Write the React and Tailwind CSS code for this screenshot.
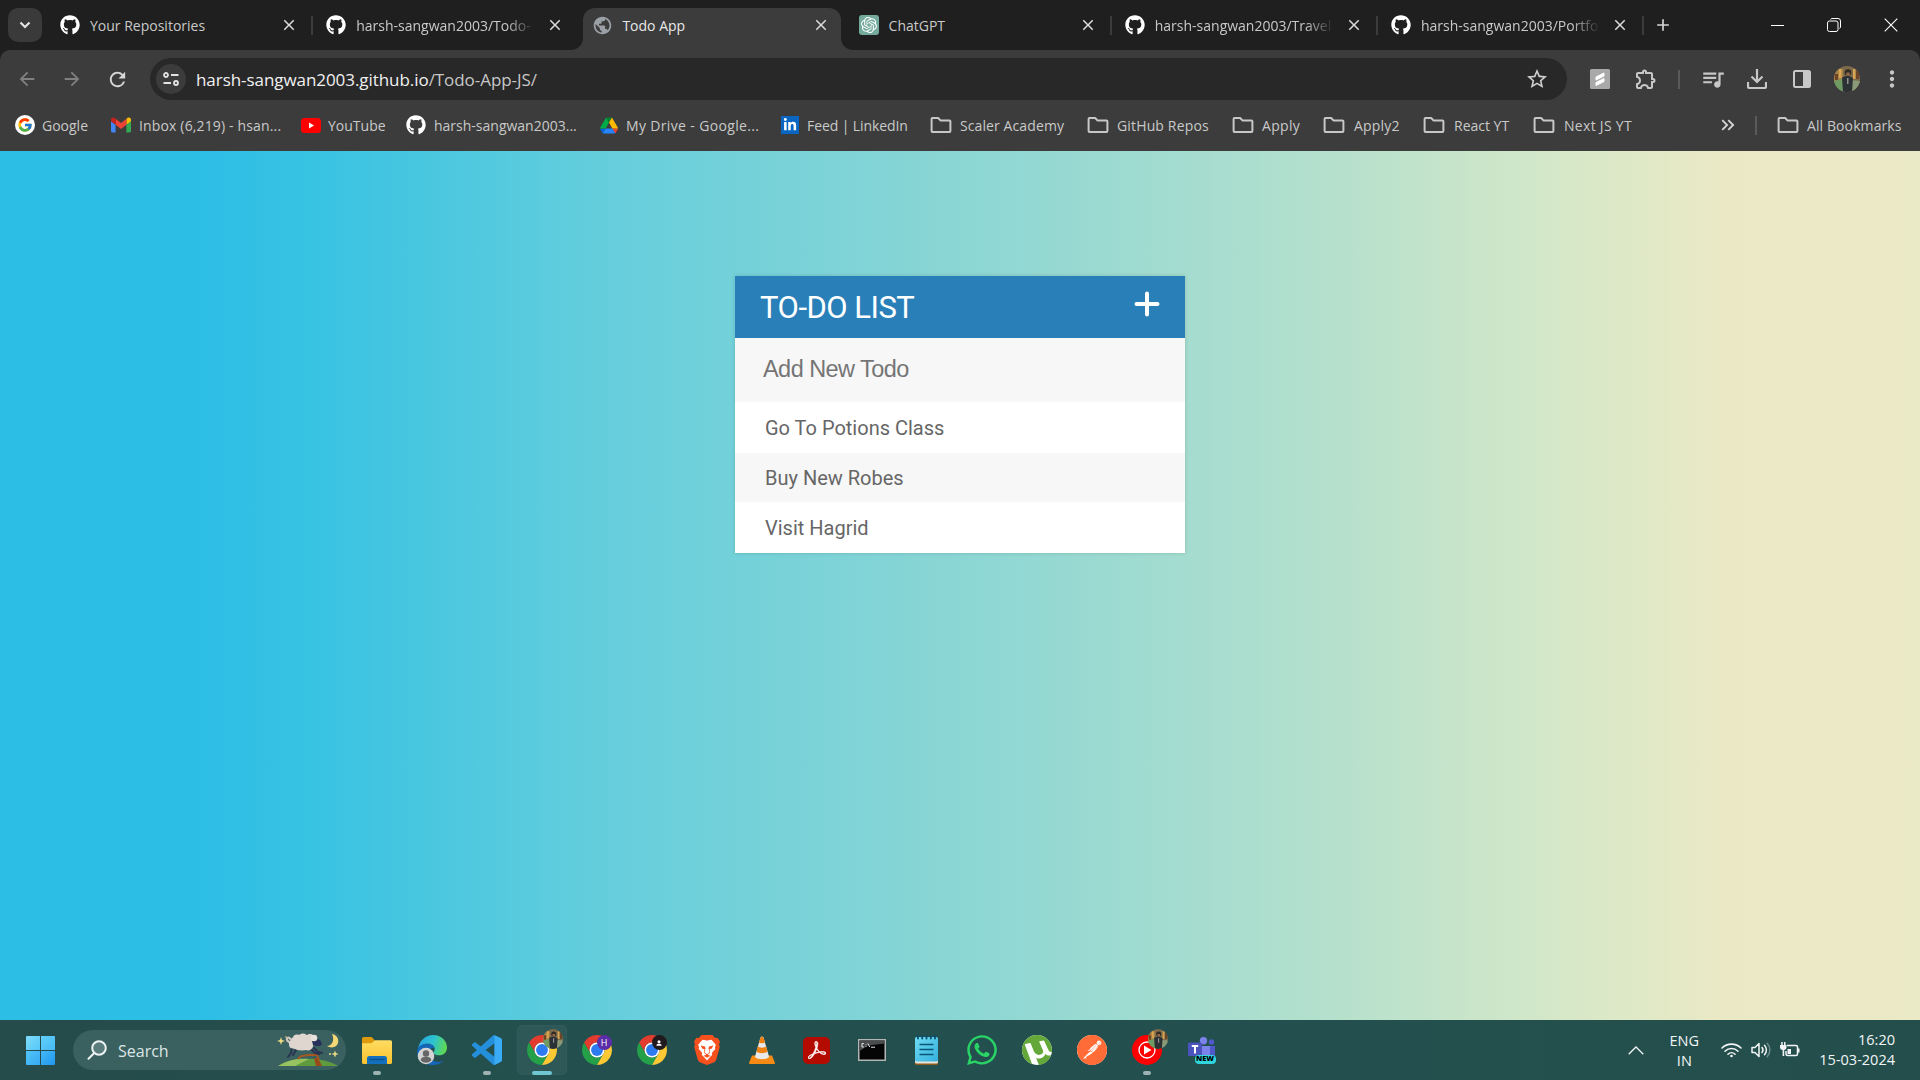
import { FcGoogle } from "react-icons/fc";
import { FaGithub, FaWhatsapp, FaLinkedinIn } from "react-icons/fa6";
import { SiOpenai, SiPostman, SiUtorrent, SiAdobeacrobatreader } from "react-icons/si";
import {
  MdQueueMusic,
  MdOutlineExtension,
  MdStarOutline,
  MdMoreVert,
  MdPublic,
  MdClose,
  MdAdd,
  MdArrowBack,
  MdArrowForward,
  MdRefresh,
  MdKeyboardDoubleArrowRight,
} from "react-icons/md";

/* ---------- small drawings ---------- */

const Github = () => <FaGithub className="size-5 shrink-0 text-white" />;

const Folder = () => (
  <svg viewBox="0 0 22 18" className="h-[18px] w-[22px] shrink-0" fill="none" stroke="#c7c7c7" strokeWidth="2" strokeLinejoin="round">
    <path d="M2.5 2h5.7l2.2 2.4h9.1a.9.9 0 0 1 .9.9v9.8a.9.9 0 0 1-.9.9h-17a.9.9 0 0 1-.9-.9V2.9a.9.9 0 0 1 .9-.9z" />
  </svg>
);

const Gmail = () => (
  <svg viewBox="0 0 20 16" className="ml-px h-4 w-5 shrink-0">
    <path fill="#4285f4" d="M1.4 15.5h3.2V7.8L0 4.3v9.8c0 .8.6 1.4 1.4 1.4z" />
    <path fill="#34a853" d="M15.4 15.5h3.2c.8 0 1.4-.6 1.4-1.4V4.3l-4.6 3.5z" />
    <path fill="#fbbc04" d="M15.4 1.8v6L20 4.3V2.5c0-1.7-2-2.7-3.3-1.7z" />
    <path fill="#ea4335" d="M4.6 7.8v-6L10 5.9l5.4-4.1v6L10 11.9z" />
    <path fill="#c5221f" d="M0 2.5v1.8l4.6 3.5v-6L3.3.8C2-.2 0 .8 0 2.5z" />
  </svg>
);

const Youtube = () => (
  <svg viewBox="0 0 20 15" className="h-[15px] w-5 shrink-0">
    <rect width="20" height="15" rx="3.5" fill="#f00" />
    <path d="M8 4.500v6l5-3z" fill="#fff" />
  </svg>
);

const Drive = () => (
  <svg viewBox="0 0 87.3 78" className="h-[17px] w-[18px] shrink-0">
    <path fill="#0066da" d="m6.600 66.850 3.850 6.650c.8 1.400 1.950 2.500 3.300 3.300l13.750-23.800h-27.500c0 1.550.4 3.100 1.200 4.500z" />
    <path fill="#00ac47" d="m43.650 25-13.750-23.800c-1.350.8-2.500 1.900-3.300 3.300l-25.400 44a9.060 9.060 0 0 0 -1.200 4.500h27.500z" />
    <path fill="#ea4335" d="m73.550 76.800c1.350-.8 2.500-1.900 3.300-3.300l1.600-2.750 7.650-13.250c.8-1.400 1.200-2.950 1.200-4.500h-27.502l5.852 11.500z" />
    <path fill="#00832d" d="m43.650 25 13.750-23.800c-1.350-.8-2.900-1.200-4.500-1.200h-18.500c-1.600 0-3.150.45-4.500 1.200z" />
    <path fill="#2684fc" d="m59.800 53h-32.300l-13.750 23.800c1.350.8 2.900 1.200 4.500 1.200h50.800c1.600 0 3.150-.45 4.500-1.200z" />
    <path fill="#ffba00" d="m73.400 26.500-12.700-22c-.8-1.400-1.950-2.500-3.300-3.300l-13.750 23.800 16.150 28h27.450c0-1.550-.4-3.100-1.200-4.500z" />
  </svg>
);

const Linkedin = () => (
  <span className="grid size-[18px] shrink-0 place-items-center bg-[#0a66c2]">
    <FaLinkedinIn className="size-[14px] text-white" />
  </span>
);

const GoogleMark = () => (
  <span className="grid size-5 shrink-0 place-items-center rounded-full bg-white">
    <FcGoogle className="size-4" />
  </span>
);

const Avatar = ({ size, id }) => (
  <svg viewBox="0 0 26 26" width={size} height={size} className="shrink-0">
    <clipPath id={id}>
      <circle cx="13" cy="13" r="13" />
    </clipPath>
    <g clipPath={`url(#${id})`}>
      <rect width="26" height="26" fill="#7d6a4a" />
      <path d="M0 3h9v12H0z" fill="#a88246" />
      <path d="M5 3h2.500v9H5zM19 3h2.500v10H19z" fill="#d9a552" />
      <path d="M1 8h3v6H1zM22 5h3v8h-3z" fill="#6d4426" />
      <path d="M0 15l8-2 2 14H0z" fill="#6f9a63" />
      <path d="M17 14l9 1v12h-8z" fill="#8a9a78" />
      <path d="M8 11.500l4-1.500h3l4 2-1 14H9z" fill="#2c3135" />
      <path d="M13 12h1.500v6H13z" fill="#8f9290" />
      <circle cx="14" cy="6.500" r="3.300" fill="#2f2a24" />
      <path d="M12.300 6.500h3.400v3.300h-3.400z" fill="#93694c" />
    </g>
  </svg>
);

const Chrome = () => (
  <svg viewBox="0 0 48 48" className="size-[30px]">
    <path fill="#e33b2e" d="M24 12H44.780A24 24 0 0 0 3.220 12L13.600 30A12 12 0 0 1 24 12Z" />
    <path fill="#24a148" d="M3.220 12A24 24 0 0 0 24 48L34.400 30A12 12 0 0 1 13.600 30Z" />
    <path fill="#fcc934" d="M44.780 12A24 24 0 0 1 24 48L34.400 30A12 12 0 0 0 24 12Z" />
    <circle cx="24" cy="24" r="12" fill="#fff" />
    <circle cx="24" cy="24" r="9.500" fill="#2d7bf0" />
  </svg>
);

const Explorer = () => (
  <svg viewBox="0 0 30 28" className="h-7 w-[30px]">
    <defs>
      <linearGradient id="folderFront" x1="0" y1="0" x2="0" y2="1">
        <stop offset="0" stopColor="#ffdc62" />
        <stop offset="1" stopColor="#f9c22c" />
      </linearGradient>
    </defs>
    <path d="M0 2.500A1.500 1.500 0 0 1 1.500 1h8.200l3.200 3.400V10H0z" fill="#dc9a0c" />
    <path d="M0 7.200h9.500L13 4.200h15.500A1.500 1.500 0 0 1 30 5.700V26.500a1.500 1.500 0 0 1-1.500 1.500h-27A1.500 1.500 0 0 1 0 26.500z" fill="url(#folderFront)" />
    <path d="M5 22.500a2.500 2.500 0 0 1 2.500-2.500h15a2.500 2.500 0 0 1 2.500 2.500V28H5z" fill="#1370be" />
    <path d="M8 23.500h14" stroke="#0b4f8f" strokeWidth="1.400" strokeLinecap="round" />
  </svg>
);

const Edge = () => (
  <svg viewBox="0 0 30 30" className="size-[30px]">
    <defs>
      <linearGradient id="edgeTop" x1="0" y1="0.400" x2="1" y2="0.600">
        <stop offset="0" stopColor="#2aa5e4" />
        <stop offset=".5" stopColor="#2cc3cf" />
        <stop offset="1" stopColor="#62d948" />
      </linearGradient>
    </defs>
    <path d="M1 14C2.500 5 9 0 16 0c8.500 0 14 6 14 12.500 0 5-3.500 7.800-8 7.800-4 0-5.500-1.600-5.500-2.800 0-1 1.200-1.500 1.200-3.500 0-3-3-5.300-7-5.300C6 8.700 3 10.700 1 14z" fill="url(#edgeTop)" />
    <path d="M0 16C1 11 5 8.700 10 8.700c4 0 7.700 2.300 7.700 5.300-3-2.500-5.700.5-5.700 4.500 0 5 5 8.500 9.500 8.500 2.500 0 4.500-1 6-2-3 3.500-7 5-12 5C7 30 0 24 0 16z" fill="#1566b8" />
    <circle cx="9" cy="21" r="8.300" fill="#d3d3d3" />
    <circle cx="9" cy="18.500" r="3.200" fill="#666" />
    <path d="M3.800 25.500c0-3 2.200-3.700 5.200-3.700s5.200.7 5.200 3.700a7 7 0 0 1-10.400 0z" fill="#666" />
  </svg>
);

const VsCode = () => (
  <svg viewBox="0 0 24 24" className="size-[30px]">
    <path
      fill="#2490dc"
      d="M23.150 2.587L18.210.21a1.494 1.494 0 0 0-1.705.29l-9.460 8.630-4.120-3.128a.999.999 0 0 0-1.276.057L.327 7.261A1 1 0 0 0 .326 8.740L3.899 12 .326 15.260a1 1 0 0 0 .001 1.479L1.650 17.940a.999.999 0 0 0 1.276.057l4.120-3.128 9.460 8.630a1.492 1.492 0 0 0 1.704.29l4.942-2.377A1.500 1.500 0 0 0 24 20.060V3.939a1.500 1.500 0 0 0-.85-1.352zm-5.146 14.861L10.826 12l7.178-5.448v10.896z"
    />
    <path fill="#3aabf5" d="M18 .1l5.150 2.487A1.500 1.500 0 0 1 24 3.939V20.060a1.500 1.500 0 0 1-.85 1.350L18 23.900z" />
  </svg>
);

const Brave = () => (
  <svg viewBox="0 0 26 30" className="h-[30px] w-[26px]">
    <path d="M7.500 0h11l2.700 3 2.300-.3L26 6.500l-1 3 .8 2.500-3.500 12.500a6 6 0 0 1-2 2.700L13 30l-7.300-2.800a6 6 0 0 1-2-2.700L.2 12 1 9.500l-1-3 2.500-3.800 2.300.3z" fill="#f6501e" />
    <path d="M8.500 4.800l4.500.8 4.500-.8 4.300 5-.8 2.600.3 1.600-3.500 4 .4 2-1.700 1.500L13 25.500l-3.500-4-1.700-1.500.4-2-3.500-4 .3-1.600-.8-2.600z" fill="#fff" />
    <path d="M6.500 10.500l4.500 1 .5 1.700-1 4.300 2.500 1.800 2.500-1.800-1-4.300.5-1.700 4.500-1-2 3.200-2 .5.600 3.500-3.100 2.700-3.100-2.700.6-3.500-2-.5z" fill="#f6501e" />
    <path d="M9.500 20.800l3.500-1.300 3.500 1.300-3.500 2z" fill="#f6501e" />
  </svg>
);

const Vlc = () => (
  <svg viewBox="0 0 26 28" className="h-7 w-[26px]">
    <path d="M3 19.500h20l3 7.500a1 1 0 0 1-1 1H1a1 1 0 0 1-1-1z" fill="#f58a14" />
    <path d="M11.500 1.500C12 0 14 0 14.500 1.500L20 20.500c0 3.500-14 3.500-14 0z" fill="#e9e9e9" />
    <path d="M11.200 2.500L10 6.500c1.500 1 4.500 1 6 0l-1.200-4C14.200 0 11.800 0 11.200 2.500z" fill="#f08010" />
    <path d="M8.900 10.500L7.500 15.500c2 2.200 9 2.200 11 0l-1.400-5c-2 1.500-6.200 1.500-8.200 0z" fill="#f08010" />
  </svg>
);

const Acrobat = () => (
  <span className="grid size-[27px] place-items-center rounded-[5px] bg-[#b30b00]">
    <SiAdobeacrobatreader className="size-[18px] text-white" stroke="#fff" strokeWidth=".8" />
  </span>
);

const Terminal = () => (
  <svg viewBox="0 0 28 22" className="h-[22px] w-7">
    <rect x=".75" y=".75" width="26.500" height="20.500" fill="#050505" stroke="#b3b6b6" strokeWidth="1.500" />
    <path d="M1.500 1.500h25v3L10 6.500 1.500 12z" fill="#4a4d4e" />
    <path d="M5.800 4.500H4v3.500h1.800M8 5v.6M8 7.300v.7M9.800 4.500l2 3.500M13 8.200h4" stroke="#e6e6e6" strokeWidth="1" fill="none" />
  </svg>
);

const Notepad = () => (
  <svg viewBox="0 0 23 30" className="h-[30px] w-[23px]">
    <rect y="24" width="23" height="6" rx="1.500" fill="#8a5a1c" />
    <rect y="22" width="23" height="6.500" rx="1.500" fill="#e9e4dc" />
    <defs>
      <linearGradient id="notepadPage" x1="0" y1="0" x2="1" y2="1">
        <stop offset="0" stopColor="#6fdcf3" />
        <stop offset="1" stopColor="#35b0dc" />
      </linearGradient>
    </defs>
    <rect y="2" width="23" height="24.500" rx="1.500" fill="url(#notepadPage)" />
    <path d="M4.500 9.500h14M4.500 14.500h14M4.500 19.500h14" stroke="#0b5678" strokeWidth="1.700" />
    <path d="M3 1v2.500M7.200 1v2.500M11.500 1v2.500M15.800 1v2.500M20 1v2.500" stroke="#0b5070" strokeWidth="1.800" strokeLinecap="round" />
  </svg>
);

const Utorrent = () => (
  <span className="grid size-[30px] place-items-center rounded-full bg-white">
    <SiUtorrent className="size-[30px] text-[#65a83a]" />
  </span>
);

const Postman = () => (
  <span className="grid size-[30px] place-items-center rounded-full bg-white">
    <SiPostman className="size-[30px] text-[#ff6c37]" />
  </span>
);

const YoutubeMusic = () => (
  <svg viewBox="0 0 30 30" className="size-[30px]">
    <circle cx="15" cy="15" r="15" fill="#f00" />
    <circle cx="15" cy="15" r="8" fill="none" stroke="#fff" strokeWidth="1.300" />
    <path d="M12 10.500v9l7.500-4.500z" fill="#fff" />
  </svg>
);

const Teams = () => (
  <div className="relative h-[27px] w-7">
    <svg viewBox="0 0 28 24" className="h-6 w-7">
      <circle cx="15.500" cy="3.700" r="3.700" fill="#7b83eb" />
      <circle cx="23.500" cy="5" r="2.700" fill="#5059c9" />
      <path d="M19 9h8v8a4 4 0 0 1-8 0z" fill="#5059c9" />
      <path d="M10 9h12v9a5 5 0 0 1-12 0z" fill="#7b83eb" />
      <rect y="5.500" width="14" height="13.500" rx="1.500" fill="#4b53bc" />
      <path d="M3.800 9h6.400M7 9v7.500" stroke="#fff" strokeWidth="2" />
    </svg>
    <span className="absolute top-[18px] left-[7px] flex h-[9px] w-[21px] items-center justify-center rounded-sm bg-[#2fd6dd] text-[7.5px] leading-none font-extrabold text-black">
      NEW
    </span>
  </div>
);

const Sheep = () => (
  <svg viewBox="0 0 62 34" className="h-[34px] w-[62px]">
    <path d="M1 33C12 25 44 22 61 33z" fill="#5f9a3e" />
    <path d="M1 33C12 26 24 25 32 26L18 33z" fill="#97c260" />
    <path d="M41 25l4 8h-6l-2-8z" fill="#9a4a1a" />
    <path d="M21 26l3-3 8-1 8 0 2 5" stroke="#a8581f" strokeWidth="1.800" fill="none" />
    <path d="M15 15l-1 5-3 4M19 17l-3 5M37 15l4 4 4 1M34 16l4 4 4 1" stroke="#2b3352" strokeWidth="2" fill="none" strokeLinecap="round" />
    <path d="M14 7C12 3 9 5 10 7s3 2 5 4" stroke="#cfc4bc" strokeWidth="2.200" fill="none" />
    <g fill="#dfd6cf">
      <ellipse cx="25" cy="9.500" rx="12" ry="8" />
      <circle cx="16" cy="11.500" r="4" />
      <circle cx="33" cy="6" r="5" />
      <circle cx="26" cy="4.500" r="4" />
      <circle cx="20" cy="5.500" r="4" />
      <circle cx="31" cy="12.500" r="5" />
    </g>
    <path d="M35 8c2-2 6-2 8-1l2 4c-1 2.500-6 2.500-9 1z" fill="#27305a" />
    <circle cx="37" cy="5" r="3.300" fill="#e9e1db" />
    <path d="M55 1c5 1 7 5 6 9s-6 6-11 3c5 0 8-6 5-12z" fill="#f3d774" />
    <path d="M4 4l1 3 3 1-3 1-1 3-1-3-3-1 3-1z" fill="#efdc84" />
    <path d="M58 17.500l1 2.500 2.500 1-2.500 1-1 2.500-1-2.500-2.500-1 2.500-1z" fill="#e6d684" />
    <circle cx="53" cy="21" r="1" fill="#e6d684" />
    <circle cx="9" cy="4" r=".8" fill="#e6d684" />
  </svg>
);

/* ---------- browser chrome ---------- */

const GlobeIcon = () => <MdPublic className="size-[21px] shrink-0 text-[#9aa0a6]" />;
const GptIcon = () => (
  <span className="grid size-5 shrink-0 place-items-center rounded-[3px] bg-[#74aa9c]">
    <SiOpenai className="size-4 text-white" />
  </span>
);

const tabs = [
  { title: "Your Repositories", Icon: Github, sep: true },
  { title: "harsh-sangwan2003/Todo-", Icon: Github, fade: true },
  { title: "Todo App", Icon: GlobeIcon, active: true },
  { title: "ChatGPT", Icon: GptIcon, sep: true },
  { title: "harsh-sangwan2003/Travel", Icon: Github, sep: true, fade: true },
  { title: "harsh-sangwan2003/Portfo", Icon: Github, sep: true, fade: true },
];

function Tab({ title, Icon, active, sep, fade }) {
  return (
    <div className="relative flex h-[50px] w-[266.2px] shrink-0 items-center pl-[13px]">
      {active && (
        <div className="absolute top-2 bottom-0 left-1 w-[258px] rounded-t-xl bg-[#3c3c3c]">
          <div className="absolute bottom-0 -left-3 size-3 bg-[radial-gradient(circle_at_0_0,transparent_11.5px,#3c3c3c_12.5px)]" />
          <div className="absolute -right-3 bottom-0 size-3 bg-[radial-gradient(circle_at_100%_0,transparent_11.5px,#3c3c3c_12.5px)]" />
        </div>
      )}
      <div className="relative flex w-full items-center">
        <div className="flex size-5 shrink-0 items-center justify-center">
          <Icon />
        </div>
        <div
          className={
            "ml-[10px] w-[179px] pt-[2px] text-[14px] leading-5 whitespace-nowrap " +
            (active ? "text-[#e8e8e8] " : "text-[#c9c9c9] ") +
            (fade ? "[mask-image:linear-gradient(to_right,black_84%,transparent_100%)]" : "")
          }
        >
          {title}
        </div>
        <MdClose className="ml-[11px] size-[18px] text-[#dcdcdc]" />
      </div>
      {sep && <div className="absolute top-4 right-0 h-[19px] w-[2px] bg-[#3c3c3c]" />}
    </div>
  );
}

const bookmarks = [
  { label: "Google", Icon: GoogleMark, w: "w-[95px] gap-[7px]" },
  { label: "Inbox (6,219) - hsan...", Icon: Gmail, w: "w-[191px] gap-2 tracking-[0.15px]" },
  { label: "YouTube", Icon: Youtube, w: "w-[105px] gap-[7px]" },
  { label: "harsh-sangwan2003...", Icon: Github, w: "w-[194px] gap-2" },
  { label: "My Drive - Google...", Icon: Drive, w: "w-[181px] gap-2 tracking-[0.35px]" },
  { label: "Feed | LinkedIn", Icon: Linkedin, w: "w-[149px] gap-2 tracking-[-0.1px]" },
  { label: "Scaler Academy", Icon: Folder, w: "w-[157px] gap-2 tracking-[0.1px]" },
  { label: "GitHub Repos", Icon: Folder, w: "w-[145px] gap-2 tracking-[0.15px]" },
  { label: "Apply", Icon: Folder, w: "w-[91px] gap-2 tracking-[0.3px]" },
  { label: "Apply2", Icon: Folder, w: "w-[100px] gap-[9px] tracking-[0.2px]" },
  { label: "React YT", Icon: Folder, w: "w-[110px] gap-[9px]" },
  { label: "Next JS YT", Icon: Folder, w: "w-[110px] gap-[9px] tracking-[0.3px]" },
];

function Browser() {
  return (
    <header className="h-[151px] bg-[#1f1f1f]">
      <div className="flex h-[50px]">
        <div className="flex w-[47px] items-center pl-2">
          <div className="grid size-[34px] place-items-center rounded-[10px] bg-[#3a3a3a]">
            <svg viewBox="0 0 12 8" className="h-2 w-3" fill="none" stroke="#e3e3e3" strokeWidth="2.2">
              <path d="M1.5 1.500L6 6l4.500-4.500" />
            </svg>
          </div>
        </div>
        {tabs.map((t) => (
          <Tab key={t.title} {...t} />
        ))}
        <div className="flex flex-1 items-center justify-between pr-[22px] pl-[9px]">
          <MdAdd className="size-5 text-[#d6d6d6]" />
          <div className="flex items-center gap-[43px] text-white">
            <div className="h-px w-[13px] bg-white" />
            <svg viewBox="0 0 14 14" className="size-[14px]" fill="none" stroke="currentColor">
              <rect x=".5" y="3" width="10.500" height="10.500" rx="2" />
              <path d="M3.500 1.500A2 2 0 0 1 5 .5h6a2.500 2.500 0 0 1 2.500 2.500v6a2 2 0 0 1-1 1.500" />
            </svg>
            <svg viewBox="0 0 14 14" className="size-[14px]" fill="none" stroke="currentColor" strokeWidth="1.100">
              <path d="M.7.7l12.600 12.600M13.300.7L.7 13.300" />
            </svg>
          </div>
        </div>
      </div>

      <div className="h-[101px] rounded-t-[10px] bg-[#3c3c3c] pt-2">
        <div className="flex h-[42px] items-center">
          <div className="flex w-[150px] items-center gap-[23px] pl-4">
            <MdArrowBack className="size-[22px] text-[#808080]" />
            <MdArrowForward className="size-[22px] text-[#808080]" />
            <MdRefresh className="size-[23px] text-[#d6d6d6]" />
          </div>
          <div className="flex h-[42px] w-[1417px] items-center rounded-full bg-[#282828] pr-[18px] pl-[6px]">
            <div className="grid size-[30px] place-items-center rounded-full bg-[#3c3c3c]">
              <svg viewBox="0 0 16 14" className="h-[14px] w-4" fill="none" stroke="#e3e3e3" strokeWidth="1.800">
                <circle cx="3" cy="3" r="2" />
                <path d="M8 3h7.500M.5 11H8" />
                <circle cx="13" cy="11" r="2" />
              </svg>
            </div>
            <div className="ml-[10px] flex-1 pt-px text-[17px] tracking-[-0.06px] text-[#c7c7c7]">
              <span className="text-[#f1f1f1]">harsh-sangwan2003.github.io</span>/Todo-App-JS/
            </div>
            <MdStarOutline className="size-6 text-[#d0d0d0]" />
          </div>
          <div className="flex flex-1 items-center pl-[23px] text-[#c7c7c7]">
            <svg viewBox="0 0 20 20" className="size-5">
              <rect width="20" height="20" rx="1.500" fill="#a9a9a9" />
              <path d="M6 8l8-4v3l-8 4zM6 13.500l8-4v3l-8 4z" fill="#fff" stroke="#fff" strokeLinejoin="round" />
            </svg>
            <MdOutlineExtension className="ml-[24px] size-6" />
            <div className="ml-5 h-[19px] w-[2px] bg-[#5a5a5a]" />
            <MdQueueMusic className="ml-[20px] size-[26px]" />
            <svg viewBox="0 0 20 20" className="ml-[21px] size-5" fill="none" stroke="currentColor" strokeWidth="2.200">
              <path d="M10 0v12.500M4.500 7.500L10 13l5.500-5.500M1 13v4.500a1.500 1.500 0 0 0 1.500 1.500h15a1.500 1.500 0 0 0 1.500-1.500V13" />
            </svg>
            <svg viewBox="0 0 18 18" className="ml-[26px] size-[18px]">
              <rect x="1" y="1" width="16" height="16" rx="1.500" fill="none" stroke="currentColor" strokeWidth="2" />
              <path d="M10 1h7v16h-7z" fill="currentColor" />
            </svg>
            <div className="ml-[23px]">
              <Avatar size={26} id="toolbarAvatar" />
            </div>
            <MdMoreVert className="ml-[19px] size-[26px]" />
          </div>
        </div>
        <div className="mt-[5px] flex h-10 items-center pl-[15px] text-[14px] text-[#c9c9c9]">
          {bookmarks.map(({ label, Icon, w }) => (
            <div key={label} className={"flex shrink-0 items-center whitespace-nowrap " + w}>
              <Icon />
              <span>{label}</span>
            </div>
          ))}
          <div className="flex flex-1 items-center pl-[74px] whitespace-nowrap">
            <MdKeyboardDoubleArrowRight className="size-[22px] text-[#d6d6d6]" />
            <div className="mr-5 ml-4 h-[19px] w-[2px] bg-[#5a5a5a]" />
            <Folder />
            <span className="ml-[8px] tracking-[0.1px]">All Bookmarks</span>
          </div>
        </div>
      </div>
    </header>
  );
}

/* ---------- page ---------- */

const todos = ["Go To Potions Class", "Buy New Robes", "Visit Hagrid"];

function TodoPage() {
  return (
    <main className="flex h-[869px] items-start justify-center bg-[linear-gradient(to_right,#2dbee6_0%,#2dbee6_10.5%,#38c3e2_16.5%,#66cedc_32%,#8bd6d4_50%,#b4e0cd_69%,#d6e8c8_81.5%,#ebe9c5_90%,#ebeac6_100%)] pt-[125px]">
      <section className="w-[450px] bg-[#f7f7f7] font-[Roboto,sans-serif] shadow-[0_0_4px_rgba(0,0,0,0.15)]">
        <div className="flex h-[62px] items-center justify-between bg-[#2980b9] px-[25px] text-white">
          <h1 className="pt-[2px] text-[31px] leading-9 tracking-[-0.5px]">TO-DO LIST</h1>
          <svg viewBox="0 0 26 26" className="mb-[6px] size-[26px]" stroke="currentColor" strokeWidth="4" strokeLinecap="round">
            <path d="M13 2.500v21M2.500 13h21" />
          </svg>
        </div>
        <input
          className="block h-16 w-full bg-[#f7f7f7] pb-[2px] pl-7 font-[Liberation_Sans,sans-serif] text-[23.5px] tracking-[-0.55px] outline-none placeholder:text-[#757575]"
          placeholder="Add New Todo"
        />
        <ul className="text-[20px] text-[#666]">
          {todos.map((t, i) => (
            <li
              key={t}
              className={"flex items-center pl-[30px] " + (i % 2 ? "h-[49px] bg-[#f7f7f7]" : "h-[51px] bg-white")}
            >
              {t}
            </li>
          ))}
        </ul>
      </section>
    </main>
  );
}

/* ---------- taskbar ---------- */

const Badge = ({ children }) => <div className="absolute -top-[6px] -right-[6px]">{children}</div>;

const apps = [
  { id: "explorer", Icon: Explorer, run: true },
  { id: "edge", Icon: Edge },
  { id: "vscode", Icon: VsCode, run: true },
  { id: "chrome", Icon: Chrome, active: true, badge: <Badge><Avatar size={20} id="chromeAvatar" /></Badge> },
  {
    id: "chrome-h",
    Icon: Chrome,
    badge: (
      <div className="absolute top-0 right-0 grid size-[15px] place-items-center rounded-full bg-[#5b2da8] text-[9px] leading-none text-white">H</div>
    ),
  },
  {
    id: "chrome-guest",
    Icon: Chrome,
    badge: (
      <div className="absolute top-0 right-0 grid size-[15px] place-items-center rounded-full bg-[#20191d]">
        <svg viewBox="0 0 8 8" className="size-[6px]" fill="#fff">
          <circle cx="4" cy="2.300" r="2" />
          <path d="M.5 7.500c0-2 1.500-2.600 3.500-2.600s3.500.6 3.500 2.600z" />
        </svg>
      </div>
    ),
  },
  { id: "brave", Icon: Brave },
  { id: "vlc", Icon: Vlc },
  { id: "acrobat", Icon: Acrobat },
  { id: "terminal", Icon: Terminal },
  { id: "notepad", Icon: Notepad },
  { id: "whatsapp", Icon: () => <FaWhatsapp className="size-[34px] text-[#2ad366]" /> },
  { id: "utorrent", Icon: Utorrent },
  { id: "postman", Icon: Postman },
  { id: "ytmusic", Icon: YoutubeMusic, run: true, badge: <Badge><Avatar size={20} id="musicAvatar" /></Badge> },
  { id: "teams", Icon: Teams },
];

function Taskbar() {
  return (
    <footer className="flex h-[60px] items-center bg-[linear-gradient(to_right,#254b4a,#23504e_30%,#23504e_70%,#244e4c)] text-[#f2f5f5]">
      <div className="flex w-[73px] pl-[26px]">
        <div className="grid size-[29px] grid-cols-2 gap-px overflow-hidden rounded-[1px]">
          <div className="bg-[linear-gradient(135deg,#7fdcfc,#55c6f8)]" />
          <div className="bg-[linear-gradient(135deg,#63d0fa,#45b9f5)]" />
          <div className="bg-[linear-gradient(135deg,#52c4f8,#36a9f2)]" />
          <div className="bg-[linear-gradient(135deg,#45b8f6,#1f97ee)]" />
        </div>
      </div>
      <div className="flex h-10 w-[273px] items-center overflow-hidden rounded-full bg-[#3a605f] pr-[7px] pl-[14px]">
        <svg viewBox="0 0 20 20" className="size-5" fill="none" stroke="#eef3f3" strokeWidth="2">
          <circle cx="12" cy="8" r="6.800" fill="#5a7c7b" />
          <path d="M7.200 13L1.500 18.700" strokeLinecap="round" />
        </svg>
        <span className="ml-[11px] flex-1 pt-px text-[16px] text-[#dde6e6]">Search</span>
        <Sheep />
      </div>
      <nav className="ml-[3px] flex">
        {apps.map(({ id, Icon, run, active, badge }) => (
          <div key={id} className="grid h-[60px] w-[55px] place-items-center">
            <div
              className={
                "relative grid size-[50px] place-items-center rounded-[5px] " + (active ? "border border-[#315c5b] bg-[#2d5857]" : "")
              }
            >
              <div className="relative">
                <Icon />
                {badge}
              </div>
              {run && <div className="absolute bottom-0 h-1 w-2 rounded-full bg-[#9cb3b2]" />}
              {active && <div className="absolute -bottom-px h-1 w-5 rounded-full bg-[#6fc6cf]" />}
            </div>
          </div>
        ))}
      </nav>
      <div className="ml-auto flex items-center pr-[25px] text-[14.5px] leading-5">
        <svg viewBox="0 0 16 9" className="h-[9px] w-4" fill="none" stroke="currentColor" strokeWidth="1.300">
          <path d="M.7 8.300L8 1l7.300 7.300" />
        </svg>
        <div className="ml-[25px] w-[30px] pt-px text-center text-[14.5px]">
          ENG
          <br />
          IN
        </div>
        <div className="ml-[22px] flex items-center gap-[9px]">
          <svg viewBox="0 0 21 16" className="h-4 w-[21px]" fill="none" stroke="currentColor" strokeWidth="1.600" strokeLinecap="round">
            <path d="M1 6a13.500 13.500 0 0 1 19 0M4 9.200a9.200 9.200 0 0 1 13 0M7 12.200a5 5 0 0 1 7 0" />
            <circle cx="10.500" cy="14" r="1.300" fill="currentColor" stroke="none" />
          </svg>
          <svg viewBox="0 0 20 18" className="h-[18px] w-5" fill="none" stroke="currentColor" strokeWidth="1.500" strokeLinecap="round" strokeLinejoin="round">
            <path d="M1 6.500v5h3l4 4v-13l-4 4z" />
            <path d="M11 6.500a4 4 0 0 1 0 5M13.500 4.200a7 7 0 0 1 0 9.600" />
            <path d="M16.200 2.200a10 10 0 0 1 0 13.600" opacity=".35" />
          </svg>
          <svg viewBox="0 0 20 16" className="h-4 w-5" fill="none" stroke="currentColor" strokeWidth="1.500">
            <path d="M7 3.500h9a1.500 1.500 0 0 1 1.500 1.500v7a1.500 1.500 0 0 1-1.500 1.500H7.500A1.500 1.500 0 0 1 6 12V9" />
            <path d="M7.500 7h3.500v5H7.500z" fill="currentColor" stroke="none" />
            <path d="M18 6.500h1.500v4H18z" fill="currentColor" stroke="none" />
            <path d="M0 3h6.500v2.500a2.500 2.500 0 0 1-2.300 2.500V14H2.600V8A2.500 2.500 0 0 1 0 5.500zM1.200 0h1.500v3H1.200zM4 0h1.500v3H4z" fill="currentColor" stroke="none" />
          </svg>
        </div>
        <div className="ml-[19px] text-right whitespace-nowrap">
          16:20
          <br />
          15-03-2024
        </div>
      </div>
    </footer>
  );
}

export default function App() {
  return (
    <div className="h-[1080px] w-[1920px] overflow-hidden font-['Open_Sans','Noto_Sans',sans-serif]">
      <Browser />
      <TodoPage />
      <Taskbar />
    </div>
  );
}
